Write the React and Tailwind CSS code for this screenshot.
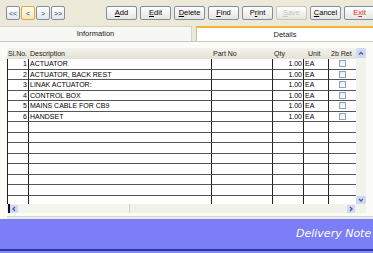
import React from 'react';

const rows = [
  { no: 1, desc: 'ACTUATOR' },
  { no: 2, desc: 'ACTUATOR, BACK REST' },
  { no: 3, desc: 'LINAK ACTUATOR:' },
  { no: 4, desc: 'CONTROL BOX' },
  { no: 5, desc: 'MAINS CABLE FOR CB9' },
  { no: 6, desc: 'HANDSET' },
];

const empty = Array.from({ length: 9 });

const NavBtn = ({ label, hot }) => (
  <div
    className={`w-[14px] h-[14px] flex items-center justify-center rounded-[2px] border text-[7px] leading-none text-[#26407a] ${
      hot
        ? 'border-[#e3a63a] bg-gradient-to-b from-[#fffbe8] to-[#f3e9c4]'
        : 'border-[#7d8ea8] bg-gradient-to-b from-white to-[#e4e6ea]'
    }`}
  >
    {label}
  </div>
);

const Btn = ({ children, className = '' }) => (
  <div
    className={`w-[31px] h-[14px] flex items-center justify-center rounded-[2px] border border-[#7d8ea8] bg-gradient-to-b from-white to-[#e6e5df] text-[7.5px] leading-none ${className}`}
  >
    {children}
  </div>
);

const Check = () => (
  <div className="w-[7px] h-[7px] border border-[#8ea3bd] bg-gradient-to-br from-[#e4e8ef] to-white" />
);

const Arrow = ({ dir }) => {
  const d = {
    up: 'M2 5.5 L4 3.5 L6 5.5',
    down: 'M2 3 L4 5 L6 3',
    left: 'M5 2 L3 4 L5 6',
    right: 'M3 2 L5 4 L3 6',
  }[dir];
  return (
    <svg width="8" height="8" viewBox="0 0 8 8">
      <path d={d} fill="none" stroke="#4d6185" strokeWidth="1.3" />
    </svg>
  );
};

export default function App() {
  const cell = 'border-r border-b border-r-[#222] border-b-[#555] h-[10.5px] leading-[10px] text-[7px] whitespace-nowrap overflow-hidden';

  return (
    <div
      className="w-[373px] h-[253px] overflow-hidden flex flex-col bg-[#ece9d8] text-black"
      style={{ fontFamily: '"Liberation Sans", Arial, sans-serif' }}
    >
      {/* toolbar */}
      <div className="h-[26px] flex items-start pt-[6px] pl-[6px]">
        <div className="flex gap-[1px]">
          <NavBtn label="<<" />
          <NavBtn label="<" hot />
          <NavBtn label=">" />
          <NavBtn label=">>" />
        </div>
        <div className="flex gap-[3px] ml-[41px]">
          <Btn><span className="underline">A</span>dd</Btn>
          <Btn><span className="underline">E</span>dit</Btn>
          <Btn><span className="underline">D</span>elete</Btn>
          <Btn><span className="underline">F</span>ind</Btn>
          <Btn>P<span className="underline">r</span>int</Btn>
          <Btn className="text-[#c8c8c0] border-[#c9c7ba]"><span className="underline">S</span>ave</Btn>
          <Btn><span className="underline">C</span>ancel</Btn>
          <Btn className="text-[#e0201a]">E<span className="underline">x</span>it</Btn>
        </div>
      </div>

      {/* tabs */}
      <div className="h-[16px] flex border-b border-[#c9c8be]">
        <div className="w-[192px] flex items-center justify-center bg-[#f7f7f3] border-t border-r border-[#d4d3c8] text-[7.5px] text-[#222]">
          Information
        </div>
        <div className="w-[4px]" />
        <div className="flex-1 flex items-center justify-center bg-white border-t-2 border-l border-t-[#f0b43c] border-l-[#c0bfb4] text-[7.5px] text-[#222]">
          Details
        </div>
      </div>

      {/* panel */}
      <div className="h-[177px] bg-[#fbfbf8] pt-[6px] pl-[7px] flex flex-col">
        <div className="flex h-[165px]">
          <div className="w-[349px] flex flex-col">
            {/* header */}
            <div className="grid grid-cols-[22px_183px_61px_31px_25px_27px] h-[11px] bg-gradient-to-b from-[#f4f3ec] to-[#e3e1d4] text-[7px] leading-[11px] text-[#222]">
              <div className="pl-[1px]">Sl.No.</div>
              <div className="pl-[1px]">Description</div>
              <div className="pl-[1px]">Part No</div>
              <div className="pl-[1px]">Qty</div>
              <div className="pl-[4px]">Unit</div>
              <div className="pl-[2px]">2b Ret</div>
            </div>
            {/* body */}
            <div className="h-[145px] overflow-hidden bg-white border-l border-[#222]">
              {rows.map((r) => (
                <div key={r.no} className="grid grid-cols-[21px_183px_61px_31px_25px_27px]">
                  <div className={`${cell} text-right pr-[1px]`}>{r.no}</div>
                  <div className={`${cell} pl-[1px]`}>{r.desc}</div>
                  <div className={cell} />
                  <div className={`${cell} text-right pr-[1px]`}>1.00</div>
                  <div className={`${cell} pl-[1px]`}>EA</div>
                  <div className={`${cell} flex items-center justify-center border-r-0`}>
                    <Check />
                  </div>
                </div>
              ))}
              {empty.map((_, i) => (
                <div key={i} className="grid grid-cols-[21px_183px_61px_31px_25px_27px]">
                  <div className={cell} />
                  <div className={cell} />
                  <div className={cell} />
                  <div className={cell} />
                  <div className={cell} />
                  <div className={`${cell} border-r-0`} />
                </div>
              ))}
            </div>
            {/* horizontal scrollbar */}
            <div className="h-[9px] flex items-center bg-[#f1f1ec]">
              <div className="w-[2px] h-[9px] bg-[#111] ml-[1px]" />
              <div className="w-[8px] h-[8px] flex items-center justify-center rounded-[1px] bg-[#cdd9f5]">
                <Arrow dir="left" />
              </div>
              <div className="w-[112px] h-[9px] border-r border-[#d8d7cf] bg-[#f4f4ef]" />
              <div className="flex-1" />
              <div className="w-[8px] h-[8px] flex items-center justify-center rounded-[1px] bg-[#cdd9f5] mr-[1px]">
                <Arrow dir="right" />
              </div>
            </div>
          </div>
          {/* vertical scrollbar */}
          <div className="w-[10px] flex flex-col bg-[#f3f3ee] pb-[9px]">
            <div className="h-[10px] flex items-center justify-center rounded-[1px] bg-[#cdd9f5]">
              <Arrow dir="up" />
            </div>
            <div className="flex-1" />
            <div className="h-[8px] flex items-center justify-center rounded-[1px] bg-[#cdd9f5]">
              <Arrow dir="down" />
            </div>
          </div>
        </div>
        <div className="flex-1 mt-[3px] border-t border-[#d6d5cc] bg-[#ecebe3]" />
      </div>

      {/* footer band */}
      <div className="h-[30px] bg-[#7c7ef8] flex items-center pl-[296px] overflow-hidden">
        <span
          className="text-white italic text-[11px] whitespace-nowrap"
          style={{ fontFamily: '"DejaVu Sans", Verdana, sans-serif' }}
        >
          Delivery Note
        </span>
      </div>
      <div className="h-[2px] bg-[#2636a8]" />
      <div className="flex-1 bg-[#8a8cf0]" />
    </div>
  );
}
